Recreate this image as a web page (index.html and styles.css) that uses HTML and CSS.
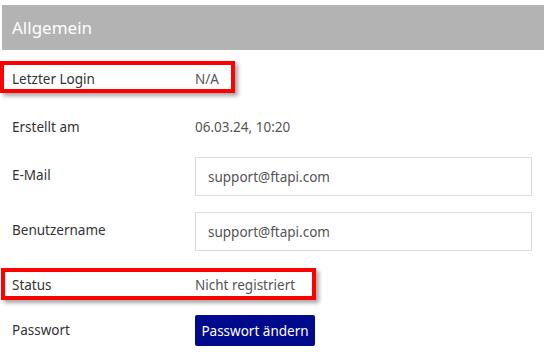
FILE: index.html
```html
<!DOCTYPE html>
<html lang="de">
<head>
  <meta charset="UTF-8" />
  <title>Allgemein</title>
  <link rel="stylesheet" href="styles.css">
</head>
<body>

<div class="header">Allgemein</div>

<div class="rows">
  <div class="row">
    <span class="mark mark-login"></span>
    <span class="label">Letzter Login</span>
    <span class="value">N/A</span>
  </div>
  <div class="row">
    <span class="label">Erstellt am</span>
    <span class="value">06.03.24, 10:20</span>
  </div>
  <div class="row row-input">
    <span class="label">E-Mail</span>
    <input type="text" value="support@ftapi.com">
  </div>
  <div class="row row-input">
    <span class="label">Benutzername</span>
    <input type="text" value="support@ftapi.com">
  </div>
  <div class="row">
    <span class="mark mark-status"></span>
    <span class="label">Status</span>
    <span class="value">Nicht registriert</span>
  </div>
  <div class="row row-button">
    <span class="label">Passwort</span>
    <button>Passwort ändern</button>
  </div>
</div>

</body>
</html>
```

FILE: styles.css
```css
html, body {
  margin: 0;
  padding: 0;
  background: #fff;
  font-family: 'Noto Sans', 'Open Sans', sans-serif;
  font-size: 13.5px;
  color: #333;
}

.header {
  margin: 5px 0 0 2px;
  height: 45px;
  line-height: 45px;
  padding-left: 10px;
  background: #b3b3b3;
  color: #fff;
  font-size: 17px;
}

.rows {
  padding-left: 12px;
  padding-top: 5px;
}

.row {
  position: relative;
  display: grid;
  grid-template-columns: 183px 337px;
  align-items: center;
  height: 48px;
}

.row-input {
  height: 55px;
  padding-bottom: 4px;
  box-sizing: border-box;
}

.row-input .label {
  padding-bottom: 4px;
}

.row-button {
  align-items: start;
  padding-top: 6px;
  box-sizing: border-box;
}

.row-button .label {
  padding-top: 6px;
}

.label {
  color: #333;
}

.value {
  color: #555;
}

input {
  box-sizing: border-box;
  height: 39px;
  width: 337px;
  padding: 0 12px;
  border: 1px solid #ddd;
  font-family: inherit;
  font-size: 13.5px;
  color: #555;
  outline: none;
}

button {
  width: 120px;
  height: 31px;
  border: none;
  border-radius: 2px;
  background: #000a8c;
  color: #fff;
  font-family: inherit;
  font-size: 13.5px;
  padding: 0;
}

.mark {
  position: absolute;
  left: -12px;
  height: 32px;
  box-sizing: border-box;
  border: 4px solid #f00;
  box-shadow: 3px 3px 4px rgba(0, 0, 0, 0.35);
}

.mark-login {
  top: 6px;
  width: 235px;
}

.mark-status {
  top: 7px;
  left: -11px;
  width: 315px;
}
```
